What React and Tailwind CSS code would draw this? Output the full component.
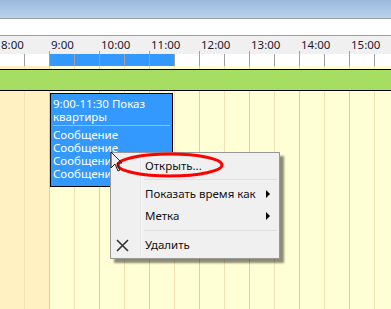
import React from 'react';

const hours = ['8:00', '9:00', '10:00', '11:00', '12:00', '13:00', '14:00', '15:00', ''];
const font = { fontFamily: '"Noto Sans", "Open Sans", sans-serif' };

const App = () => {
  return (
    <div className="relative w-[391px] h-[309px] overflow-hidden bg-[#ffffd5] text-[11.5px] leading-none" style={font}>
      {/* Title bar */}
      <div className="h-[19px] bg-gradient-to-b from-[#9cb9db] to-[#b9d3ec] border-b border-[#a0a0a0]" />
      <div className="h-[17px] bg-white border-b border-[#a0a0a0]" />

      {/* Time header */}
      <div className="bg-[#f0f0f0] flex -ml-px">
        {hours.map((h, i) => (
          <div key={i} className="w-[50px] shrink-0 flex flex-col">
            <div className="h-[15px] pl-[2px] pt-[3px] text-[#1a1a2e] text-[11.5px]">{h}</div>
            <div className="h-[3px] border-l border-[#a0a0a0]" />
          </div>
        ))}
      </div>

      {/* Slots row */}
      <div className="flex -ml-px h-[12px] bg-white">
        {hours.map((h, i) => (
          <React.Fragment key={i}>
            <div className={`w-[25px] shrink-0 border-l border-[#a0a0a0] ${i >= 1 && i <= 3 ? 'bg-[#3399ff]' : ''}`} />
            <div className={`w-[25px] shrink-0 border-l border-[#a0a0a0] ${i >= 1 && i <= 2 ? 'bg-[#3399ff]' : ''}`} />
          </React.Fragment>
        ))}
      </div>

      {/* Day grid */}
      <div className="relative">
        <div className="absolute inset-0 flex -ml-px">
          {hours.map((h, i) => (
            <React.Fragment key={i}>
              <div className={`w-[25px] shrink-0 h-[260px] border-l border-[#f5c98e] ${i === 0 ? 'bg-[#fff1c2]' : ''}`} />
              <div className={`w-[25px] shrink-0 h-[260px] border-l border-[#f3e2b2] ${i === 0 ? 'bg-[#fff1c2]' : ''}`} />
            </React.Fragment>
          ))}
        </div>
        <div className="relative pt-[3px]">
          <div className="h-[22px] bg-[#a6de64] border-y border-black" />
        </div>
      </div>

      {/* Event */}
      <div className="absolute left-[50px] top-[93px] w-[123px] h-[94px] bg-[#3399ff] border border-black text-white px-[2px] pt-[3px]">
        <div className="leading-[13px]">9:00-11:30 Показ</div>
        <div className="leading-[13px]">квартиры</div>
        <div className="h-px bg-[#a4bcd2] mt-[2px] mb-[2px]" />
        <div className="leading-[13px]">Сообщение</div>
        <div className="leading-[13px]">Сообщение</div>
        <div className="leading-[13px]">Сообщение</div>
        <div className="leading-[13px]">Сообщение</div>
      </div>

      {/* Context menu */}
      <div className="absolute left-[110px] top-[152px] w-[170px] bg-[#f0f0f0] border border-[#979797] shadow-[4px_4px_2px_rgba(0,0,0,0.45)] p-[2px] text-[#111]">
        <div className="absolute left-[29px] top-[2px] bottom-[2px] w-[2px] border-l border-[#e2e3e3] bg-white/60" />
        <div className="flex items-center h-[22px]">
          <div className="w-[32px]" />
          <span>Открыть...</span>
        </div>
        <div className="h-[6px] flex items-center pl-[31px]">
          <div className="w-full h-[2px] border-t border-[#e0e0e0]" />
        </div>
        <div className="flex items-center h-[22px]">
          <div className="w-[32px]" />
          <span className="flex-1">Показать время как</span>
          <span className="w-0 h-0 border-y-[4px] border-y-transparent border-l-[4px] border-l-black mr-[7px]" />
        </div>
        <div className="flex items-center h-[22px]">
          <div className="w-[32px]" />
          <span className="flex-1">Метка</span>
          <span className="w-0 h-0 border-y-[4px] border-y-transparent border-l-[4px] border-l-black mr-[7px]" />
        </div>
        <div className="h-[7px] flex items-center pl-[31px]">
          <div className="w-full h-[2px] border-t border-[#e0e0e0]" />
        </div>
        <div className="flex items-center h-[22px]">
          <div className="w-[32px] pl-[3px]">
            <svg width="13" height="13" viewBox="0 0 13 13">
              <path d="M1 1 L12 12 M12 1 L1 12" stroke="#333" strokeWidth="1.6" />
            </svg>
          </div>
          <span>Удалить</span>
        </div>
      </div>

      {/* Red highlight ellipse */}
      <svg className="absolute left-[115px] top-[151px]" width="110" height="28" viewBox="0 0 110 28">
        <ellipse cx="55" cy="14" rx="52" ry="11" fill="none" stroke="#ff0000" strokeWidth="3" />
      </svg>

      {/* Mouse cursor */}
      <svg className="absolute left-[110px] top-[151px]" width="14" height="22" viewBox="0 0 14 22">
        <path d="M1 1 L1 17 L5 13 L8 20 L10 19 L7 12 L12 12 Z" fill="none" stroke="#222" strokeWidth="1" />
      </svg>
    </div>
  );
};

export default App;
